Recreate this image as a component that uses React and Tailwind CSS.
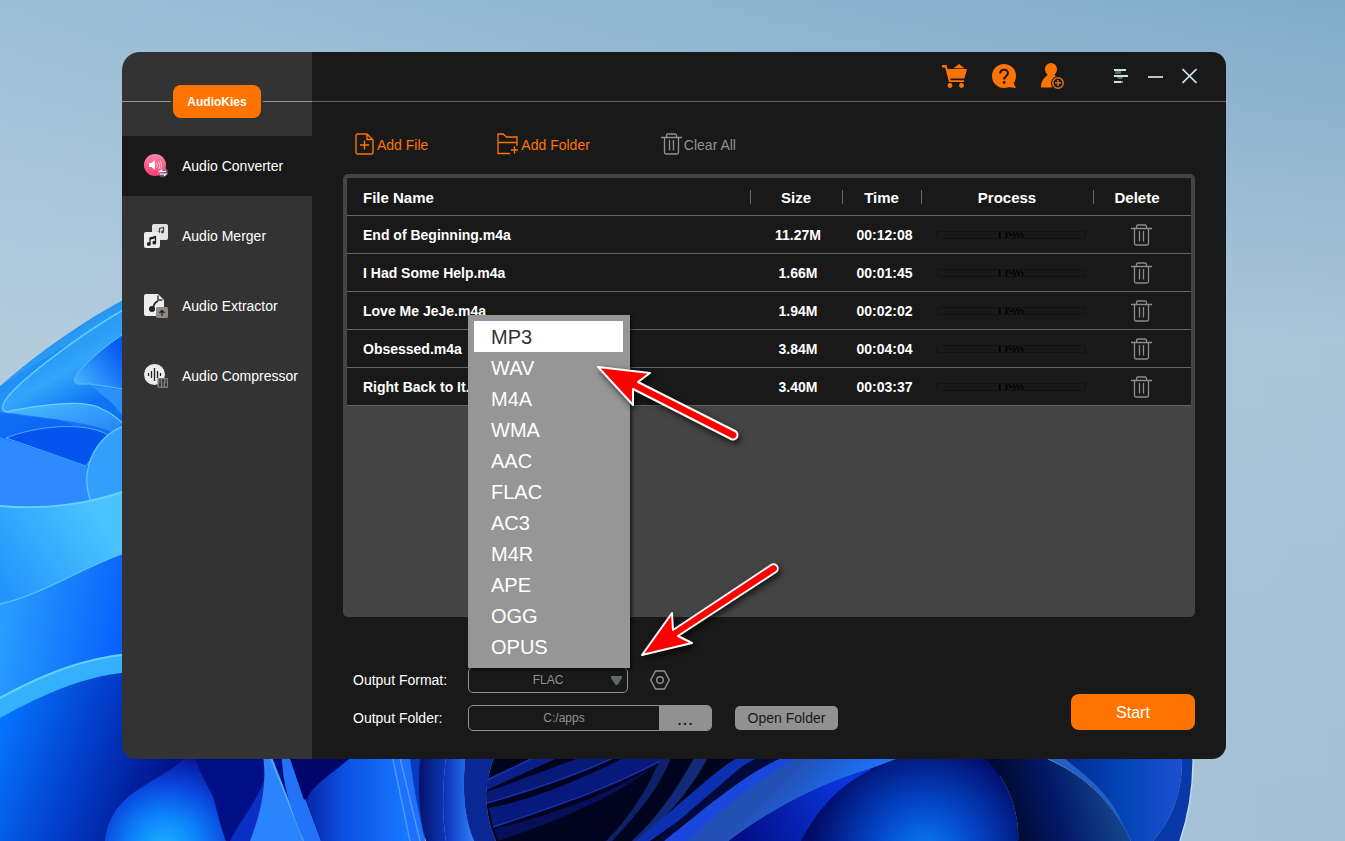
import React, { useState } from "react";

const FORMATS = ["MP3", "WAV", "M4A", "WMA", "AAC", "FLAC", "AC3", "M4R", "APE", "OGG", "OPUS"];

const FILES = [
  { id: 1, name: "End of Beginning.m4a", size: "11.27M", time: "00:12:08", progress: 0 },
  { id: 2, name: "I Had Some Help.m4a", size: "1.66M", time: "00:01:45", progress: 0 },
  { id: 3, name: "Love Me JeJe.m4a", size: "1.94M", time: "00:02:02", progress: 0 },
  { id: 4, name: "Obsessed.m4a", size: "3.84M", time: "00:04:04", progress: 0 },
  { id: 5, name: "Right Back to It.m4a", size: "3.40M", time: "00:03:37", progress: 0 },
];

const Wallpaper = () => (
  <svg
    className="absolute inset-0 h-full w-full"
    viewBox="0 0 1345 841"
    preserveAspectRatio="xMidYMid slice"
    aria-hidden="true"
  >
    <defs>
      <linearGradient id="skyX" x1="0" x2="1">
        <stop offset="0" stopColor="#9dbfd8" />
        <stop offset="1" stopColor="#82abc9" />
      </linearGradient>
      <linearGradient id="skyY" x1="0" x2="0" y1="0" y2="1">
        <stop offset="0" stopColor="#bfd2e0" stopOpacity="0" />
        <stop offset="0.4" stopColor="#bfd2e0" stopOpacity="0.65" />
        <stop offset="1" stopColor="#bfd2e0" stopOpacity="0.55" />
      </linearGradient>
      <linearGradient id="outer" gradientUnits="userSpaceOnUse" x1="40" y1="340" x2="80" y2="410">
        <stop offset="0" stopColor="#2392f0" />
        <stop offset="0.5" stopColor="#33a5fb" />
        <stop offset="1" stopColor="#0c74f3" />
      </linearGradient>
      <linearGradient id="tip" gradientUnits="userSpaceOnUse" x1="75" y1="385" x2="122" y2="350">
        <stop offset="0" stopColor="#46b6ff" />
        <stop offset="1" stopColor="#0458f2" />
      </linearGradient>
      <linearGradient id="fold" x1="0" x2="1" y1="0" y2="1">
        <stop offset="0" stopColor="#4cc0ff" />
        <stop offset="1" stopColor="#1a70f6" />
      </linearGradient>
      <linearGradient id="band" gradientUnits="userSpaceOnUse" x1="0" y1="590" x2="100" y2="520">
        <stop offset="0" stopColor="#2493fb" />
        <stop offset="1" stopColor="#4ac3ff" />
      </linearGradient>
      <linearGradient id="lower" gradientUnits="userSpaceOnUse" x1="0" y1="620" x2="122" y2="640">
        <stop offset="0" stopColor="#2a9eff" />
        <stop offset="1" stopColor="#0561fb" />
      </linearGradient>
      <linearGradient id="deep" gradientUnits="userSpaceOnUse" x1="0" y1="740" x2="170" y2="800">
        <stop offset="0" stopColor="#0572fb" />
        <stop offset="0.45" stopColor="#0240cc" />
        <stop offset="0.8" stopColor="#00209c" />
        <stop offset="1" stopColor="#000f80" />
      </linearGradient>
      <radialGradient id="bulb" gradientUnits="userSpaceOnUse" cx="165" cy="850" r="95">
        <stop offset="0" stopColor="#1fb4ff" />
        <stop offset="0.35" stopColor="#0d86fb" />
        <stop offset="0.7" stopColor="#0a44dc" />
        <stop offset="1" stopColor="#03189c" />
      </radialGradient>
      <linearGradient id="big" gradientUnits="userSpaceOnUse" x1="305" y1="800" x2="405" y2="800">
        <stop offset="0" stopColor="#0726a4" />
        <stop offset="0.4" stopColor="#0c50e2" />
        <stop offset="1" stopColor="#1677ff" />
      </linearGradient>
      <linearGradient id="stripe" x1="0" x2="1">
        <stop offset="0" stopColor="#0a2eb4" />
        <stop offset="1" stopColor="#2b80ff" />
      </linearGradient>
      <linearGradient id="stripeDark" x1="0" x2="1">
        <stop offset="0" stopColor="#04126c" />
        <stop offset="1" stopColor="#0b39b8" />
      </linearGradient>
      <linearGradient id="bright" gradientUnits="userSpaceOnUse" x1="790" y1="770" x2="830" y2="810">
        <stop offset="0" stopColor="#2350b4" />
        <stop offset="1" stopColor="#1d70f5" />
      </linearGradient>
      <linearGradient id="violet" gradientUnits="userSpaceOnUse" x1="740" y1="840" x2="850" y2="790">
        <stop offset="0" stopColor="#020e86" />
        <stop offset="1" stopColor="#0b36de" />
      </linearGradient>
      <radialGradient id="dome" gradientUnits="userSpaceOnUse" cx="925" cy="855" r="115">
        <stop offset="0" stopColor="#0a80f4" />
        <stop offset="0.45" stopColor="#0446c8" />
        <stop offset="1" stopColor="#010b68" />
      </radialGradient>
      <linearGradient id="shade" gradientUnits="userSpaceOnUse" x1="1000" y1="820" x2="1110" y2="790">
        <stop offset="0" stopColor="#000726" />
        <stop offset="0.5" stopColor="#021866" />
        <stop offset="1" stopColor="#14428c" />
      </linearGradient>
      <linearGradient id="edge" gradientUnits="userSpaceOnUse" x1="1065" y1="0" x2="1180" y2="0">
        <stop offset="0" stopColor="#022a90" />
        <stop offset="0.5" stopColor="#0344b6" />
        <stop offset="1" stopColor="#1a50d0" />
      </linearGradient>
    </defs>

    <rect width="1345" height="841" fill="url(#skyX)" />
    <rect width="1345" height="841" fill="url(#skyY)" />

    {/* left petals */}
    <path d="M0 386C40 351 82 322 130 296V841H0Z" fill="url(#outer)" />
    <path d="M130 306C80 334 8 388 3 405C1 412 6 412 14 412L130 440V520H0V386Z" fill="#0f74f5" opacity="0.35" />
    <path d="M130 306C80 334 8 388 3 405C1 412 6 412 14 412" fill="none" stroke="#62ccff" strokeWidth="1.5" />
    <path d="M130 330C105 345 78 369 75 378C72 386 82 384 90 384L130 390Z" fill="url(#tip)" stroke="#58c3ff" strokeWidth="1" />
    <path d="M90 385L130 391V425L112 403Z" fill="#2d90fa" />
    <path d="M5 412C35 406 85 398 102 409C112 413 120 420 130 430V450L60 420Z" fill="url(#fold)" />
    <path d="M5 412C35 406 85 398 102 409C112 413 120 420 130 430" fill="none" stroke="#6fd0ff" strokeWidth="1.2" />
    <path d="M0 412C40 420 90 418 130 440L130 470L0 450Z" fill="#0c62f3" opacity="0.7" />
    <path d="M6 438C35 426 85 421 108 435L86 466Z" fill="#0554ef" stroke="#45aefc" strokeWidth="1" />
    <path d="M0 437L86 466L95 510H0Z" fill="#2f8aff" />
    <path d="M130 424C98 433 78 466 91 502L130 500Z" fill="#349efc" stroke="#55c6ff" strokeWidth="1.5" />
    <path d="M0 506C45 510 92 504 130 489V620H0Z" fill="url(#band)" />
    <path d="M0 506C45 510 92 504 130 489" fill="none" stroke="#64d2ff" strokeWidth="2" />
    <path d="M0 604C45 594 85 565 130 551V700H0Z" fill="url(#lower)" />
    <path d="M0 604C45 594 85 565 130 551" fill="none" stroke="#52c0ff" strokeWidth="1.5" />
    <path d="M0 698C40 676 82 658 130 654V760H0Z" fill="#35b0fc" />
    <path d="M0 698C40 676 82 658 130 654" fill="none" stroke="#63d4ff" strokeWidth="2" />
    <path d="M0 718C40 696 82 676 130 672V750H420V841H0Z" fill="url(#deep)" />

    {/* bottom petals */}
    <path d="M192 750C165 785 112 785 105 841H226C214 810 214 780 192 750Z" fill="url(#bulb)" />
    <path d="M192 750C205 790 222 800 226 841H250L285 750Z" fill="#010f86" />
    <path d="M230 841C244 815 258 800 266 775L262 841Z" fill="#0b2fc4" />
    <path d="M262 750C268 780 262 810 250 841H304L268 750Z" fill="#2a84fb" />
    <path d="M268 750L304 841" stroke="#56a8ff" strokeWidth="2" />
    <path d="M281 750C283 775 284 795 304 841H321L287 750Z" fill="#2373f8" />
    <path d="M287 750H365L304 800Z" fill="#01066a" />
    <path d="M360 750C325 780 300 792 309 808L321 841H410L391 750Z" fill="url(#big)" />
    <path d="M391 750L410 841H425L409 750Z" fill="#1f70fb" />
    <path d="M391 750L410 841M398 750L420 841" stroke="#4b9aff" strokeWidth="1.5" />
    <path d="M409 750C413 785 419 815 425 841L421 750Z" fill="#0b39be" />
    <path d="M421 750C417 785 419 815 426 841H446C442 815 442 785 447 750Z" fill="url(#stripeDark)" />
    <path d="M447 750C442 785 442 815 446 841H474C463 815 462 785 466 750Z" fill="url(#stripe)" />
    <path d="M466 750C462 785 463 815 474 841H496C482 810 484 775 498 750Z" fill="#0a2894" />
    <path d="M498 750C484 775 482 810 496 841H1000V750Z" fill="#01041f" />
    <path d="M487 779L550 750H575L487 790Z" fill="#0a1f88" />
    <path d="M487 802C540 788 590 770 630 750H600C560 765 520 780 486 792Z" fill="#071a78" />
    <path d="M493 827C560 805 620 785 680 750H640C590 775 540 798 489 808Z" fill="#08197c" />
    <path d="M498 841C560 820 620 795 655 765C610 795 550 815 494 829Z" fill="#060f58" />
    <path d="M487 780L550 750M487 803C540 788 590 770 630 750M493 827C560 805 620 785 680 750" fill="none" stroke="#1733b4" strokeWidth="1.5" />
    <path d="M606 841C632 815 650 785 664 750H674C660 790 636 815 612 841Z" fill="#0d2068" />
    <path d="M632 841C660 815 680 785 698 750H712C692 790 668 815 640 841Z" fill="#122a78" />
    <path d="M636 841L700 786C725 764 740 755 755 750H780L650 841Z" fill="#0b30b0" />
    <path d="M655 841L740 768C755 758 765 753 785 750H800L676 841Z" fill="#020a3c" />
    <path d="M664 841L700 812C735 785 760 765 800 750H830L690 841Z" fill="#1a48dc" />
    <path d="M688 841C725 805 765 775 810 750H930C860 770 790 795 729 841Z" fill="url(#bright)" />
    <path d="M729 841C770 810 815 785 872 768L801 841Z" fill="url(#violet)" />
    <path d="M801 841C825 795 858 765 930 750H975C1005 770 1020 810 1018 841Z" fill="url(#dome)" />
    <path d="M975 750C1005 770 1020 810 1018 841H1131C1110 795 1075 768 1030 752Z" fill="url(#shade)" />
    <path d="M1030 750C1075 768 1110 795 1131 841H1153C1175 815 1183 790 1182 750Z" fill="url(#edge)" />
    <path d="M1038 755C1075 768 1105 795 1124 826C1108 790 1085 775 1060 755Z" fill="#2460c4" />
    <path d="M1182 750C1183 790 1175 815 1153 841H1180C1190 812 1194 785 1193 750Z" fill="#0a38a8" />
    <path d="M1193 750C1194 785 1190 812 1180 841" fill="none" stroke="#c6dcf0" strokeWidth="1.5" />
  </svg>
);

const ConverterIcon = () => (
  <svg className="h-6 w-6" viewBox="0 0 24 24" aria-hidden="true">
    <defs>
      <linearGradient id="pink" x1="0" x2="0" y1="0" y2="1">
        <stop offset="0" stopColor="#ff86a6" />
        <stop offset="1" stopColor="#ff3a73" />
      </linearGradient>
      <linearGradient id="pinkFade" x1="0" x2="1" y1="0" y2="1">
        <stop offset="0.2" stopColor="#ff6fae" />
        <stop offset="0.8" stopColor="#4b4145" />
      </linearGradient>
    </defs>
    <circle cx="11" cy="11" r="11" fill="url(#pink)" />
    <path d="M5 9h2.500L11 6v10l-3.500-3H5z" fill="#fff" />
    <path d="M12.500 9c1 1 1 3.500 0 5M14.500 8c1.500 2 1.500 5 0 7M16 7c2 2 2 6 0 9" fill="none" stroke="#ffd6e0" strokeWidth="0.900" />
    <circle cx="19" cy="18.500" r="5" fill="url(#pinkFade)" />
    <path d="M22 17.500h-6l2-1.700M16 20h6l-2 1.700" fill="none" stroke="#fff" strokeWidth="1.200" />
  </svg>
);

const MergerIcon = () => (
  <svg className="h-6 w-6" viewBox="0 0 24 24" aria-hidden="true">
    <rect x="8" y="0" width="16" height="16" rx="2" fill="#e2e2e2" />
    <path d="M15.500 9V4.500l4-1V8" fill="none" stroke="#444" strokeWidth="1.200" />
    <circle cx="14.500" cy="9" r="1.400" fill="#444" />
    <circle cx="18.500" cy="8" r="1.400" fill="#444" />
    <rect x="0" y="8" width="16" height="16" rx="2" fill="#ededed" />
    <path d="M6 20v-6l5.500-1.500V18.500M6 15l5.500-1.500" fill="none" stroke="#222" strokeWidth="1.300" />
    <circle cx="4.800" cy="20" r="1.900" fill="#222" />
    <circle cx="10.300" cy="18.700" r="1.900" fill="#222" />
  </svg>
);

const ExtractorIcon = () => (
  <svg className="h-6 w-6" viewBox="0 0 24 24" aria-hidden="true">
    <path d="M2 0h12l6 6v14a2 2 0 0 1-2 2H2a2 2 0 0 1-2-2V2a2 2 0 0 1 2-2z" fill="#ededed" />
    <path d="M14 1.500v4.500h4.500" fill="none" stroke="#333" strokeWidth="1.400" />
    <path d="M9.500 15c-.5-4 .5-6 4.500-8" fill="none" stroke="#222" strokeWidth="1.700" />
    <circle cx="8" cy="15" r="3" fill="#222" />
    <rect x="12" y="13" width="12" height="11" rx="1.500" fill="#8f8a84" />
    <path d="M18 22v-5M15.500 19l2.500-2.500 2.500 2.500" fill="none" stroke="#222" strokeWidth="1.300" />
  </svg>
);

const CompressorIcon = () => (
  <svg className="h-6 w-6" viewBox="0 0 24 24" aria-hidden="true">
    <circle cx="10.500" cy="10.500" r="10.500" fill="#ededed" />
    <path d="M4.500 9v3M7.500 7v7M10.500 4v13M13.500 7v7M16.500 9v3" stroke="#222" strokeWidth="1.300" />
    <rect x="13.500" y="14" width="10.500" height="10" rx="1" fill="#7c7c7c" />
    <path d="M16 15v8M19 15v8M22 15v8" stroke="#2b2b2b" strokeWidth="1" />
    <path d="M15 20.500h2M18 17h2M21 20.500h2" stroke="#2b2b2b" strokeWidth="1.500" />
  </svg>
);

const CartIcon = () => (
  <svg className="h-6 w-[25px]" viewBox="0 0 25 24" fill="#ff7400" aria-hidden="true">
    <path d="M0 1h4.500l1.200 4H25l-2.600 9.500H8.200l.5 1.700H22V18H7L3.200 3.500H0z" />
    <path d="M11.500 4.200 17 0l5.500 4.200z" />
    <circle cx="8" cy="21.500" r="2.400" />
    <circle cx="19.500" cy="21.500" r="2.400" />
  </svg>
);

const HelpIcon = () => (
  <svg className="h-6 w-6" viewBox="0 0 24 24" aria-hidden="true">
    <circle cx="12" cy="12" r="12" fill="#ff7400" />
    <path d="M20.500 17l3.500 7-8-1z" fill="#ff7400" />
    <path d="M8.200 9.500C8.200 4.500 16 4.500 16 9c0 3-3.900 3.300-3.900 6.500" fill="none" stroke="#191919" strokeWidth="2" />
    <circle cx="12.100" cy="18.500" r="1.400" fill="#191919" />
  </svg>
);

const AddUserIcon = () => (
  <svg className="h-[26px] w-6" viewBox="0 0 24 26" aria-hidden="true">
    <path d="M10 0a6 6 0 0 1 6 6c0 3-1.500 4.500-2.500 6 1 1 1.800 1.500 2.500 1.800L10.500 24.500H0C0 18.500 2.500 15 6.500 12 5.500 10.500 4 9 4 6a6 6 0 0 1 6-6z" fill="#ff7400" />
    <circle cx="17" cy="20" r="7" fill="#191919" />
    <circle cx="17" cy="20" r="5.200" fill="none" stroke="#e0701a" strokeWidth="1.500" />
    <path d="M17 17v6M14 20h6" stroke="#e0701a" strokeWidth="1.500" />
  </svg>
);

const MenuIcon = () => (
  <svg className="h-4 w-[15px]" viewBox="0 0 15 16" shapeRendering="crispEdges" aria-hidden="true">
    <path d="M1 3h6v3H1zM3 8h6v2H3zM4 10h4v1H4z" fill="#5d6566" />
    <path d="M0 1h12v2H0zM0 7h14v2H0zM0 13h7v2H0z" fill="#cfe3e3" />
    <path d="M7 13h2v2H7z" fill="#7d8a8a" />
  </svg>
);

const TrashIcon = () => (
  <svg className="h-[22px] w-[21px]" viewBox="0 0 21 22" fill="none" stroke="currentColor" strokeWidth="1.300" aria-hidden="true">
    <path d="M0 4.500h21M5.500 4V2.500a1.500 1.500 0 0 1 1.500-1.500h7a1.500 1.500 0 0 1 1.500 1.500V4M3.500 5v14.500a1.500 1.500 0 0 0 1.500 1.500h11a1.500 1.500 0 0 0 1.500-1.500V5M8.500 7v10.500M12.500 7v10.500" />
  </svg>
);

const AddFileIcon = () => (
  <svg className="h-[22px] w-[19px]" viewBox="0 0 19 22" fill="none" stroke="currentColor" strokeWidth="1.400" aria-hidden="true">
    <path d="M2.500 1H12l6 6v12.500A1.500 1.500 0 0 1 16.500 21h-14A1.500 1.500 0 0 1 1 19.500v-17A1.500 1.500 0 0 1 2.500 1zM12 1v5.500h5.500M9.500 7.500v9M5 12h9" />
  </svg>
);

const AddFolderIcon = () => (
  <svg className="h-[22px] w-[22px]" viewBox="0 0 22 22" fill="none" stroke="currentColor" strokeWidth="1.300" aria-hidden="true">
    <path d="M13 20.500H1V1h5l3.500 3H20v9M1 9.500h19M17.500 13.500v7M14 17h7" />
  </svg>
);

const Arrows = () => (
  <svg className="pointer-events-none absolute inset-0 z-20 h-full w-full" aria-hidden="true">
    <g
      transform="translate(-122 -52)"
      className="drop-shadow-[2px_3px_3px_rgba(0,0,0,0.7)]"
      fill="#ff0000"
      stroke="#fff"
      strokeWidth="2"
      strokeLinejoin="round"
    >
      <path d="M598 367L650 373L638 382L735 431A4 4 0 0 1 731 439L633 389L633 405Z" />
      <path d="M642 655L672 613L673 630L771 565A4 4 0 0 1 776 572L678 636L692 643Z" />
    </g>
  </svg>
);

const NAV = [
  { label: "Audio Converter", Icon: ConverterIcon },
  { label: "Audio Merger", Icon: MergerIcon },
  { label: "Audio Extractor", Icon: ExtractorIcon },
  { label: "Audio Compressor", Icon: CompressorIcon },
];

const Sidebar = () => {
  const [active, setActive] = useState("Audio Converter");

  return (
    <aside className="w-[190px] shrink-0 bg-[#333333]">
      <div className="flex h-[84px] items-center gap-[2px] pb-[1px] pt-4">
        <div className="h-px flex-1 bg-[#969b98]" />
        <button className="h-[33px] w-[88px] rounded-lg bg-[#ff7400] text-xs font-bold text-white">
          AudioKies
        </button>
        <div className="h-px flex-1 bg-[#969b98]" />
      </div>
      <nav className="flex flex-col gap-[10px]">
        {NAV.map(({ label, Icon }) => (
          <button
            key={label}
            onClick={() => setActive(label)}
            className={
              "flex h-[60px] items-center gap-[14px] whitespace-nowrap pl-[22px] text-sm text-white " +
              (active === label ? "bg-[#191919]" : "")
            }
          >
            <Icon />
            {label}
          </button>
        ))}
      </nav>
    </aside>
  );
};

const TitleBar = () => (
  <header className="flex h-[50px] shrink-0 items-center justify-end border-b border-[#646464] pb-px pr-[29px]">
    <div className="mr-[49px] flex items-center gap-[25px]">
      <button aria-label="Store">
        <CartIcon />
      </button>
      <button aria-label="Help">
        <HelpIcon />
      </button>
      <button aria-label="Account">
        <AddUserIcon />
      </button>
    </div>
    <div className="flex items-center gap-[19px]">
      <button aria-label="Menu">
        <MenuIcon />
      </button>
      <button aria-label="Minimize" className="flex h-4 w-[15px] items-center pt-px">
        <span className="h-[2px] w-full bg-[#b4c5c5]" />
      </button>
      <button aria-label="Close">
        <svg className="h-4 w-[15px]" viewBox="0 0 15 16" stroke="#cfe3e3" strokeWidth="1.700" aria-hidden="true">
          <path d="M0.500 1l14 14M14.500 1l-14 14" />
        </svg>
      </button>
    </div>
  </header>
);

const Separator = () => <span className="absolute left-0 top-3 h-[14px] w-px bg-[#666666]" />;

const FileTable = ({ files, onDelete }) => (
  <div className="flex-1 rounded-[5px] border-4 border-[#444444] bg-[#444444]">
    <table className="w-full table-fixed border-separate border-spacing-0 bg-[#191919] text-sm font-bold text-white">
      <colgroup>
        <col />
        <col className="w-[92px]" />
        <col className="w-[79px]" />
        <col className="w-[172px]" />
        <col className="w-[98px]" />
      </colgroup>
      <thead className="text-[15px]">
        <tr>
          <th className="h-[38px] border-b border-[#646464] pl-4 pt-[2px] text-left">File Name</th>
          <th className="relative border-b border-[#646464] pt-[2px]">
            <Separator />
            Size
          </th>
          <th className="relative border-b border-[#646464] pt-[2px]">
            <Separator />
            Time
          </th>
          <th className="relative border-b border-[#646464] pt-[2px]">
            <Separator />
            Process
          </th>
          <th className="relative border-b border-[#646464] pr-[10px] pt-[2px]">
            <Separator />
            Delete
          </th>
        </tr>
      </thead>
      <tbody>
        {files.map((f) => (
          <tr key={f.id}>
            <td className="h-[38px] truncate border-b border-[#646464] pl-4">{f.name}</td>
            <td className="border-b border-[#646464] pl-1 text-center">{f.size}</td>
            <td className="border-b border-[#646464] pl-[6px] text-center">{f.time}</td>
            <td className="border-b border-[#646464] pl-2">
              <div
                role="progressbar"
                aria-label={f.name}
                aria-valuenow={f.progress}
                className="mx-auto flex h-2 w-[150px] items-center justify-center overflow-hidden rounded-[3px] border border-[#111111] text-lg font-normal text-black"
              >
                {f.progress}%
              </div>
            </td>
            <td className="border-b border-[#646464] pr-px">
              <button
                aria-label={"Delete " + f.name}
                onClick={() => onDelete(f.id)}
                className="mx-auto block text-[#8c8c8c]"
              >
                <TrashIcon />
              </button>
            </td>
          </tr>
        ))}
      </tbody>
    </table>
  </div>
);

const FormatSelect = () => {
  const [format, setFormat] = useState("FLAC");
  const [hovered, setHovered] = useState("MP3");
  const [open, setOpen] = useState(true);

  const onPick = (f) => {
    setFormat(f);
    setOpen(false);
  };

  return (
    <div className="relative w-40">
      <select
        id="format"
        value={format}
        onChange={(e) => setFormat(e.target.value)}
        className="block h-[26px] w-full appearance-none rounded-[5px] border border-[#919191] bg-[#191919] text-center text-xs text-[#919191] [text-align-last:center]"
      >
        {FORMATS.map((f) => (
          <option key={f}>{f}</option>
        ))}
      </select>
      <svg className="pointer-events-none absolute right-[6px] top-[9px] h-[9px] w-[11px]" viewBox="0 0 11 9" fill="#5f6967" aria-hidden="true">
        <path d="M0 0h11v2L6.500 9h-2L0 2z" />
      </svg>

      {open && (
        <ul
          role="listbox"
          aria-label="Output Format"
          className="absolute bottom-full left-0 z-10 -mb-px w-[162px] bg-[#969696] py-[6px] pl-[6px] pr-[7px] shadow-[2px_2px_3px_rgba(0,0,0,0.6)]"
        >
          {FORMATS.map((f) => (
            <li
              key={f}
              role="option"
              aria-selected={f === hovered}
              onMouseEnter={() => setHovered(f)}
              onClick={() => onPick(f)}
              className={
                "h-[31px] pl-[17px] pt-px text-xl leading-[30px] " +
                (f === hovered ? "bg-white text-[#333333]" : "text-white")
              }
            >
              {f}
            </li>
          ))}
        </ul>
      )}
    </div>
  );
};

export default function App() {
  const [files, setFiles] = useState(FILES);
  const [folder, setFolder] = useState("C:/apps");

  const onDelete = (id) => {
    setFiles(files.filter((f) => f.id !== id));
  };

  return (
    <div className="relative flex min-h-screen pb-[82px] pl-[122px] pr-[119px] pt-[52px] font-['Liberation_Sans',Arial,sans-serif]">
      <Wallpaper />

      <div className="relative flex flex-1">
        <div className="flex flex-1 overflow-hidden rounded-[14px] rounded-tl-[18px]">
          <Sidebar />

          <main className="flex min-w-0 flex-1 flex-col bg-[#191919]">
            <TitleBar />

            <div className="flex flex-1 flex-col px-[31px] pb-7">
              <div className="flex pb-[19px] pl-3 pt-[31px] text-sm">
                <button className="mr-[69px] flex h-[22px] items-center gap-[3px] text-[#ff7400]">
                  <AddFileIcon />
                  <span className="pt-[2px]">Add File</span>
                </button>
                <button className="mr-[71px] flex h-[22px] items-center gap-[2px] text-[#ff7400]">
                  <AddFolderIcon />
                  <span className="pt-[2px]">Add Folder</span>
                </button>
                <button className="flex h-[22px] items-center gap-[2px] text-[#919191]" onClick={() => setFiles([])}>
                  <TrashIcon />
                  <span className="pt-[2px]">Clear All</span>
                </button>
              </div>

              <FileTable files={files} onDelete={onDelete} />

              <div className="mt-[50px] flex items-end justify-between pl-[10px]">
                <div className="flex flex-col gap-3 text-sm">
                  <div className="flex items-center">
                    <label htmlFor="format" className="w-[115px] text-white">
                      Output Format:
                    </label>
                    <FormatSelect />
                    <button aria-label="Format settings" className="ml-[22px]">
                      <svg className="h-5 w-5" viewBox="0 0 20 20" fill="none" stroke="#919191" strokeWidth="1.400" aria-hidden="true">
                        <path d="M5.500 1h9L19.200 10 14.500 19h-9L0.800 10z" />
                        <circle cx="10" cy="10" r="3.300" />
                      </svg>
                    </button>
                  </div>
                  <div className="flex items-center">
                    <label htmlFor="folder" className="w-[115px] text-white">
                      Output Folder:
                    </label>
                    <div className="flex h-[26px] w-[244px] overflow-hidden rounded-[5px] border border-[#919191]">
                      <input
                        id="folder"
                        value={folder}
                        onChange={(e) => setFolder(e.target.value)}
                        className="min-w-0 flex-1 text-center text-xs text-[#919191]"
                      />
                      <button aria-label="Browse" className="w-[52px] bg-[#919191] text-xl leading-5 text-[#191919]">
                        ...
                      </button>
                    </div>
                    <button className="ml-[23px] h-6 w-[103px] rounded-[5px] bg-[#919191] text-[#191919]">
                      Open Folder
                    </button>
                  </div>
                </div>

                <button className="mb-px h-9 w-[124px] rounded-lg bg-[#ff7400] pt-px text-base text-white">
                  Start
                </button>
              </div>
            </div>
          </main>
        </div>

        <Arrows />
      </div>
    </div>
  );
}
